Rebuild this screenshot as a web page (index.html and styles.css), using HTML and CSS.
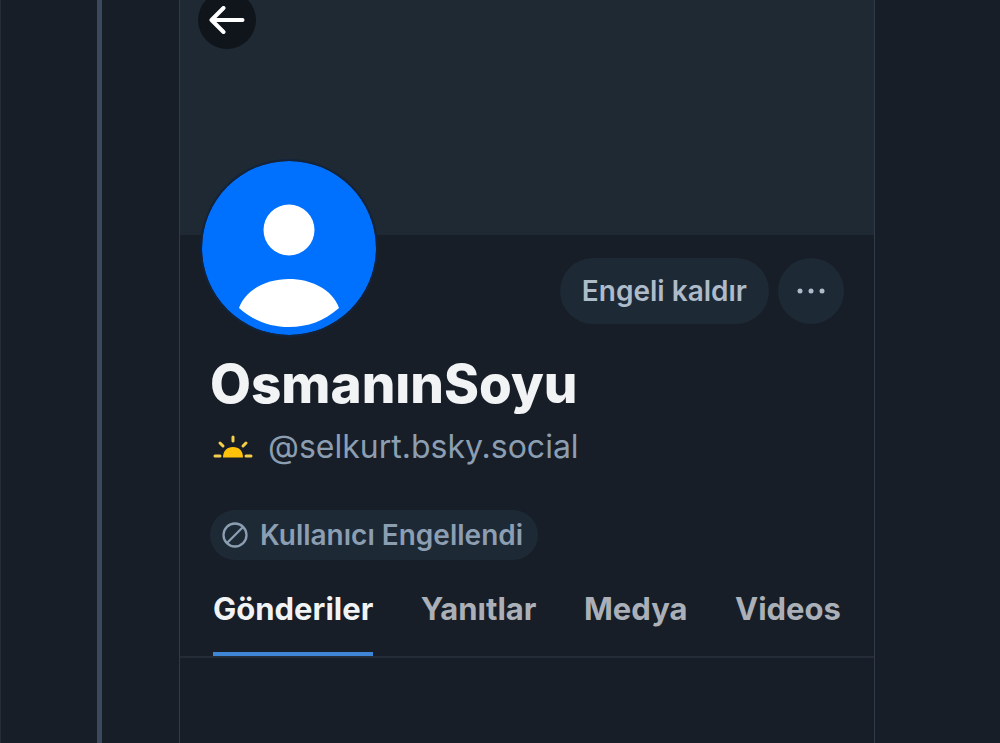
FILE: index.html
```html
<!DOCTYPE html>
<html lang="tr">
<head>
  <meta charset="UTF-8">
  <meta name="viewport" content="width=device-width, initial-scale=1.0">
  <title>OsmanınSoyu</title>
  <link rel="stylesheet" href="styles.css">
</head>
<body>

  <div class="rail"></div>

  <main class="profile">
    <div class="banner">
      <button type="button" class="back" aria-label="Geri">
        <svg width="36" height="28" viewBox="0 0 36 28" fill="none" stroke="#fff" stroke-width="4" stroke-linecap="round" stroke-linejoin="round">
          <path d="M33.500 14H3M14.500 2L2.500 14L14.500 26"/>
        </svg>
      </button>
    </div>

    <div class="top-row">
      <svg class="avatar" viewBox="0 0 174 174">
        <circle cx="87" cy="87" r="87" fill="#0070ff"/>
        <circle cx="87" cy="69" r="25.500" fill="#fff"/>
        <path d="M37 147C44 128 65 118 87 118S130 128 137 147C122 160 106 166 87 166S52 160 37 147Z" fill="#fff"/>
      </svg>
      <div class="actions">
        <button type="button" class="unblock">Engeli kaldır</button>
        <button type="button" class="more" aria-label="Diğer">
          <svg width="28" height="6" viewBox="0 0 28 6" fill="#aebbc9">
            <circle cx="3" cy="3" r="2.500"/>
            <circle cx="14" cy="3" r="2.500"/>
            <circle cx="25" cy="3" r="2.500"/>
          </svg>
        </button>
      </div>
    </div>

    <div class="info">
      <h1>OsmanınSoyu</h1>
      <p class="handle">
        <svg width="40" height="24" viewBox="0 0 40 24" aria-hidden="true">
          <path d="M10 22.500C10 16 14 12 20 12s10 4 10 10.500z" fill="#ffc20a"/>
          <path d="M2 21h5M33 21h5M20 2v4M7 8l3 3M33 8l-3 3" stroke="#f5cf4a" stroke-width="3" stroke-linecap="round"/>
        </svg>
        <span>@selkurt.bsky.social</span>
      </p>
      <div class="badge">
        <svg width="26" height="26" viewBox="0 0 26 26" fill="none" stroke="#8c9eb2" stroke-width="2.300">
          <circle cx="13" cy="13" r="11.500"/>
          <path d="M5 21L21 5"/>
        </svg>
        <span>Kullanıcı Engellendi</span>
      </div>
    </div>

    <nav class="tabs">
      <a href="#" class="active">Gönderiler</a>
      <a href="#">Yanıtlar</a>
      <a href="#">Medya</a>
      <a href="#">Videos</a>
    </nav>
  </main>

</body>
</html>
```
FILE: styles.css
```css
* {
  box-sizing: border-box;
}

body {
  font-family: Inter, "Liberation Sans", sans-serif;
  background-color: #171e27;
  color: #f1f3f5;
  margin: 0;
  display: flex;
  min-height: 100vh;
}

.rail {
  flex: none;
  width: 102px;
  border-left: 1px solid #242d38;
  border-right: 5px solid #3a4a5c;
}

.profile {
  flex: 1;
  margin: 0 125px 0 77px;
  border-left: 1px solid #2f3b49;
  border-right: 1px solid #2f3b49;
}

.banner {
  display: flex;
  align-items: flex-start;
  height: 235px;
  padding-left: 18px;
  background-color: #1e2934;
}

button {
  display: flex;
  align-items: center;
  justify-content: center;
  padding: 0;
  border: none;
  font-family: inherit;
  cursor: pointer;
}

.back {
  width: 58px;
  height: 58px;
  margin-top: -9px;
  border-radius: 50%;
  background-color: #10151b;
}

.top-row {
  display: flex;
  justify-content: space-between;
  align-items: flex-end;
  margin-top: -76px;
  padding: 0 30px 0 20px;
}

.avatar {
  width: 178px;
  height: 178px;
  border: 2px solid #13233a;
  border-radius: 50%;
}

.actions {
  display: flex;
  gap: 9px;
  margin-bottom: 13px;
}

.unblock,
.more {
  height: 66px;
  border-radius: 33px;
  background-color: #1e2936;
}

.unblock {
  padding: 0 22px;
  font-size: 28px;
  font-weight: 600;
  color: #aebbc9;
}

.more {
  width: 66px;
}

.info {
  padding: 15px 30px 0;
}

h1 {
  margin: 0;
  font-size: 53px;
  line-height: 64px;
  font-weight: 800;
}

.handle {
  display: flex;
  align-items: center;
  gap: 15px;
  margin: 11px 0 43px;
  padding-left: 3px;
  font-size: 32px;
  line-height: 40px;
  color: #8c9eb2;
}

.badge {
  display: inline-flex;
  align-items: center;
  gap: 12px;
  height: 50px;
  padding: 0 15px 0 12px;
  border-radius: 25px;
  background-color: #1e2936;
  font-size: 28px;
  font-weight: 600;
  color: #8c9eb2;
}

.tabs {
  display: flex;
  justify-content: space-between;
  padding: 31px 33px 0;
  border-bottom: 2px solid #232c37;
}

.tabs a {
  padding-bottom: 25px;
  border-bottom: 4px solid transparent;
  font-size: 31px;
  line-height: 36px;
  font-weight: 700;
  color: #abb0b8;
  text-decoration: none;
}

.tabs .active {
  border-bottom-color: #3f86d6;
  color: #f1f3f5;
}
```
